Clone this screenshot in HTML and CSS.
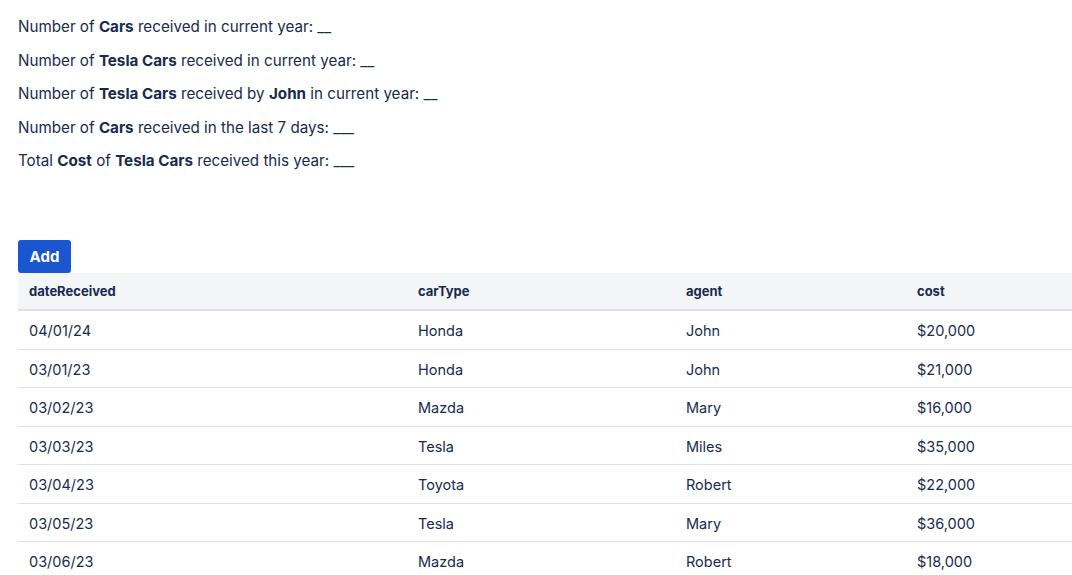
FILE: index.html
```html
<!DOCTYPE html>
<html>
<head>
<meta charset="utf-8">
<link rel="stylesheet" href="styles.css">
</head>
<body>
<div class="page">
  <div class="stats">
    <p>Number of <b>Cars</b> received in current year: __</p>
    <p>Number of <b>Tesla Cars</b> received in current year: __</p>
    <p>Number of <b>Tesla Cars</b> received by <b>John</b> in current year: __</p>
    <p>Number of <b>Cars</b> received in the last 7 days: ___</p>
    <p>Total <b>Cost</b> of <b>Tesla Cars</b> received this year: ___</p>
  </div>
  <button class="add-btn">Add</button>
  <table class="cars">
    <thead>
      <tr><th class="c1">dateReceived</th><th class="c2">carType</th><th class="c3">agent</th><th class="c4">cost</th></tr>
    </thead>
    <tbody>
      <tr><td>04/01/24</td><td>Honda</td><td>John</td><td>$20,000</td></tr>
      <tr><td>03/01/23</td><td>Honda</td><td>John</td><td>$21,000</td></tr>
      <tr><td>03/02/23</td><td>Mazda</td><td>Mary</td><td>$16,000</td></tr>
      <tr><td>03/03/23</td><td>Tesla</td><td>Miles</td><td>$35,000</td></tr>
      <tr><td>03/04/23</td><td>Toyota</td><td>Robert</td><td>$22,000</td></tr>
      <tr><td>03/05/23</td><td>Tesla</td><td>Mary</td><td>$36,000</td></tr>
      <tr><td>03/06/23</td><td>Mazda</td><td>Robert</td><td>$18,000</td></tr>
    </tbody>
  </table>
</div>
</body>
</html>
```

FILE: styles.css
```css
html, body {
  margin: 0;
  padding: 0;
  background: #ffffff;
}
body {
  font-family: Inter, "Noto Sans", sans-serif;
  color: #172b4d;
  font-size: 14px;
}
.page {
  padding: 17px 0 0 18px;
}
.stats p {
  margin: 0 0 13.5px 0;
  line-height: 20px;
  font-size: 15.2px;
}
.stats b {
  font-weight: 700;
}
.add-btn {
  display: block;
  margin-top: 69px;
  width: 53px;
  height: 33px;
  border: none;
  border-radius: 3px;
  background: #1a56cf;
  color: #ffffff;
  font-family: Inter, "Noto Sans", sans-serif;
  font-weight: 700;
  font-size: 15px;
  padding: 0;
}
.cars {
  width: 1054px;
  border-collapse: collapse;
  table-layout: fixed;
}
.cars th {
  background: #f4f5f7;
  text-align: left;
  font-size: 13px;
  font-weight: 700;
  height: 36px;
  padding: 0 11px;
  border-bottom: 2px solid #dfe1e6;
}
.cars .c1 { width: 367px; }
.cars .c2 { width: 246px; }
.cars .c3 { width: 209px; }
.cars td {
  height: 35.5px;
  padding: 2px 11px 0 11px;
  border-bottom: 1px solid #dfe1e6;
  font-size: 14.5px;
}
```
